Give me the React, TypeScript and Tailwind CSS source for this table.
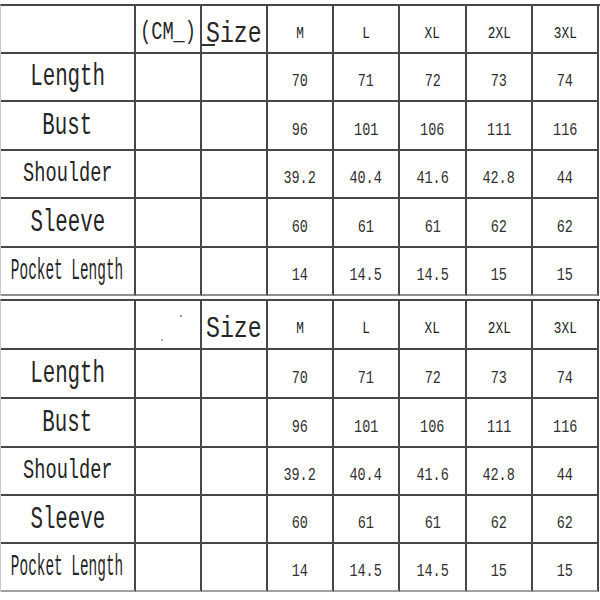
const sizes = ['M', 'L', 'XL', '2XL', '3XL'];

const rows = [
  { label: 'Length', cls: 'text-[32px] scale-x-[0.65]', values: ['70', '71', '72', '73', '74'] },
  { label: 'Bust', cls: 'text-[31px] scale-x-[0.67]', values: ['96', '101', '106', '111', '116'] },
  { label: 'Shoulder', cls: 'text-[27px] scale-x-[0.69]', values: ['39.2', '40.4', '41.6', '42.8', '44'] },
  { label: 'Sleeve', cls: 'text-[31px] scale-x-[0.67]', values: ['60', '61', '61', '62', '62'] },
  { label: 'Pocket Length', cls: 'text-[30px] scale-x-[0.48]', values: ['14', '14.5', '14.5', '15', '15'] },
];

const cell = 'relative flex items-center justify-center border-r-2 border-b-2 border-[#474747] overflow-visible';
const mono = { fontFamily: '"Liberation Mono", "DejaVu Sans Mono", monospace' };

function SizeTable({ unit, rowsClass, lastBorder }: { unit: boolean; rowsClass: string; lastBorder: string }) {
  return (
    <div
      className={`grid grid-cols-[135px_66px_66px_66px_66px_67px_66px_66px] ${rowsClass} border-t-2 border-l border-t-[#474747] border-l-[#c8c8c8] text-[#262626] whitespace-nowrap`}
      style={mono}
    >
      {/* header */}
      <div className={cell} />
      <div className={`${cell} pt-[6px]`}>
        {unit ? (
          <span className="inline-block text-[26px] leading-none scale-x-[0.72]">(CM_)</span>
        ) : (
          <>
            <span className="absolute left-[44px] top-[14px] w-[2px] h-[2px] bg-[#9a9a9a]" />
            <span className="absolute left-[25px] top-[38px] w-[2px] h-[2px] bg-[#b0b0b0]" />
          </>
        )}
      </div>
      <div className={`${cell} pt-[10px]`}>
        {unit && <span className="absolute left-0 top-[38px] w-[13px] h-[2px] bg-[#333]" />}
        <span className="inline-block text-[29px] leading-none scale-x-[0.8]">Size</span>
      </div>
      {sizes.map((s) => (
        <div key={s} className={`${cell} pt-2`}>
          <span className="inline-block text-[17px] leading-none scale-x-[0.75] text-[#222]">{s}</span>
        </div>
      ))}

      {/* body */}
      {rows.map((r, i) => {
        const last = i === rows.length - 1;
        const b = last ? lastBorder : '';
        return (
          <div key={r.label} className="contents">
            <div className={`${cell} ${b}`}>
              <span className={`inline-block leading-none ${r.cls}`}>{r.label}</span>
            </div>
            <div className={`${cell} ${b}`} />
            <div className={`${cell} ${b}`} />
            {r.values.map((v, j) => (
              <div key={j} className={`${cell} ${b} pt-2`}>
                <span className="inline-block text-[18px] leading-none scale-x-[0.75] text-[#303030]">{v}</span>
              </div>
            ))}
          </div>
        );
      })}
    </div>
  );
}

export default function App() {
  return (
    <div className="w-[600px] h-[600px] bg-white pt-1 overflow-hidden">
      <SizeTable unit rowsClass="grid-rows-[48px_48px_49px_48px_49px_48px]" lastBorder="border-b-[#8f8f8f]" />
      <div className="h-[3px]" />
      <SizeTable unit={false} rowsClass="grid-rows-[49px_49px_49px_48px_48px_48px]" lastBorder="border-b-[#a0a0a0]" />
    </div>
  );
}
